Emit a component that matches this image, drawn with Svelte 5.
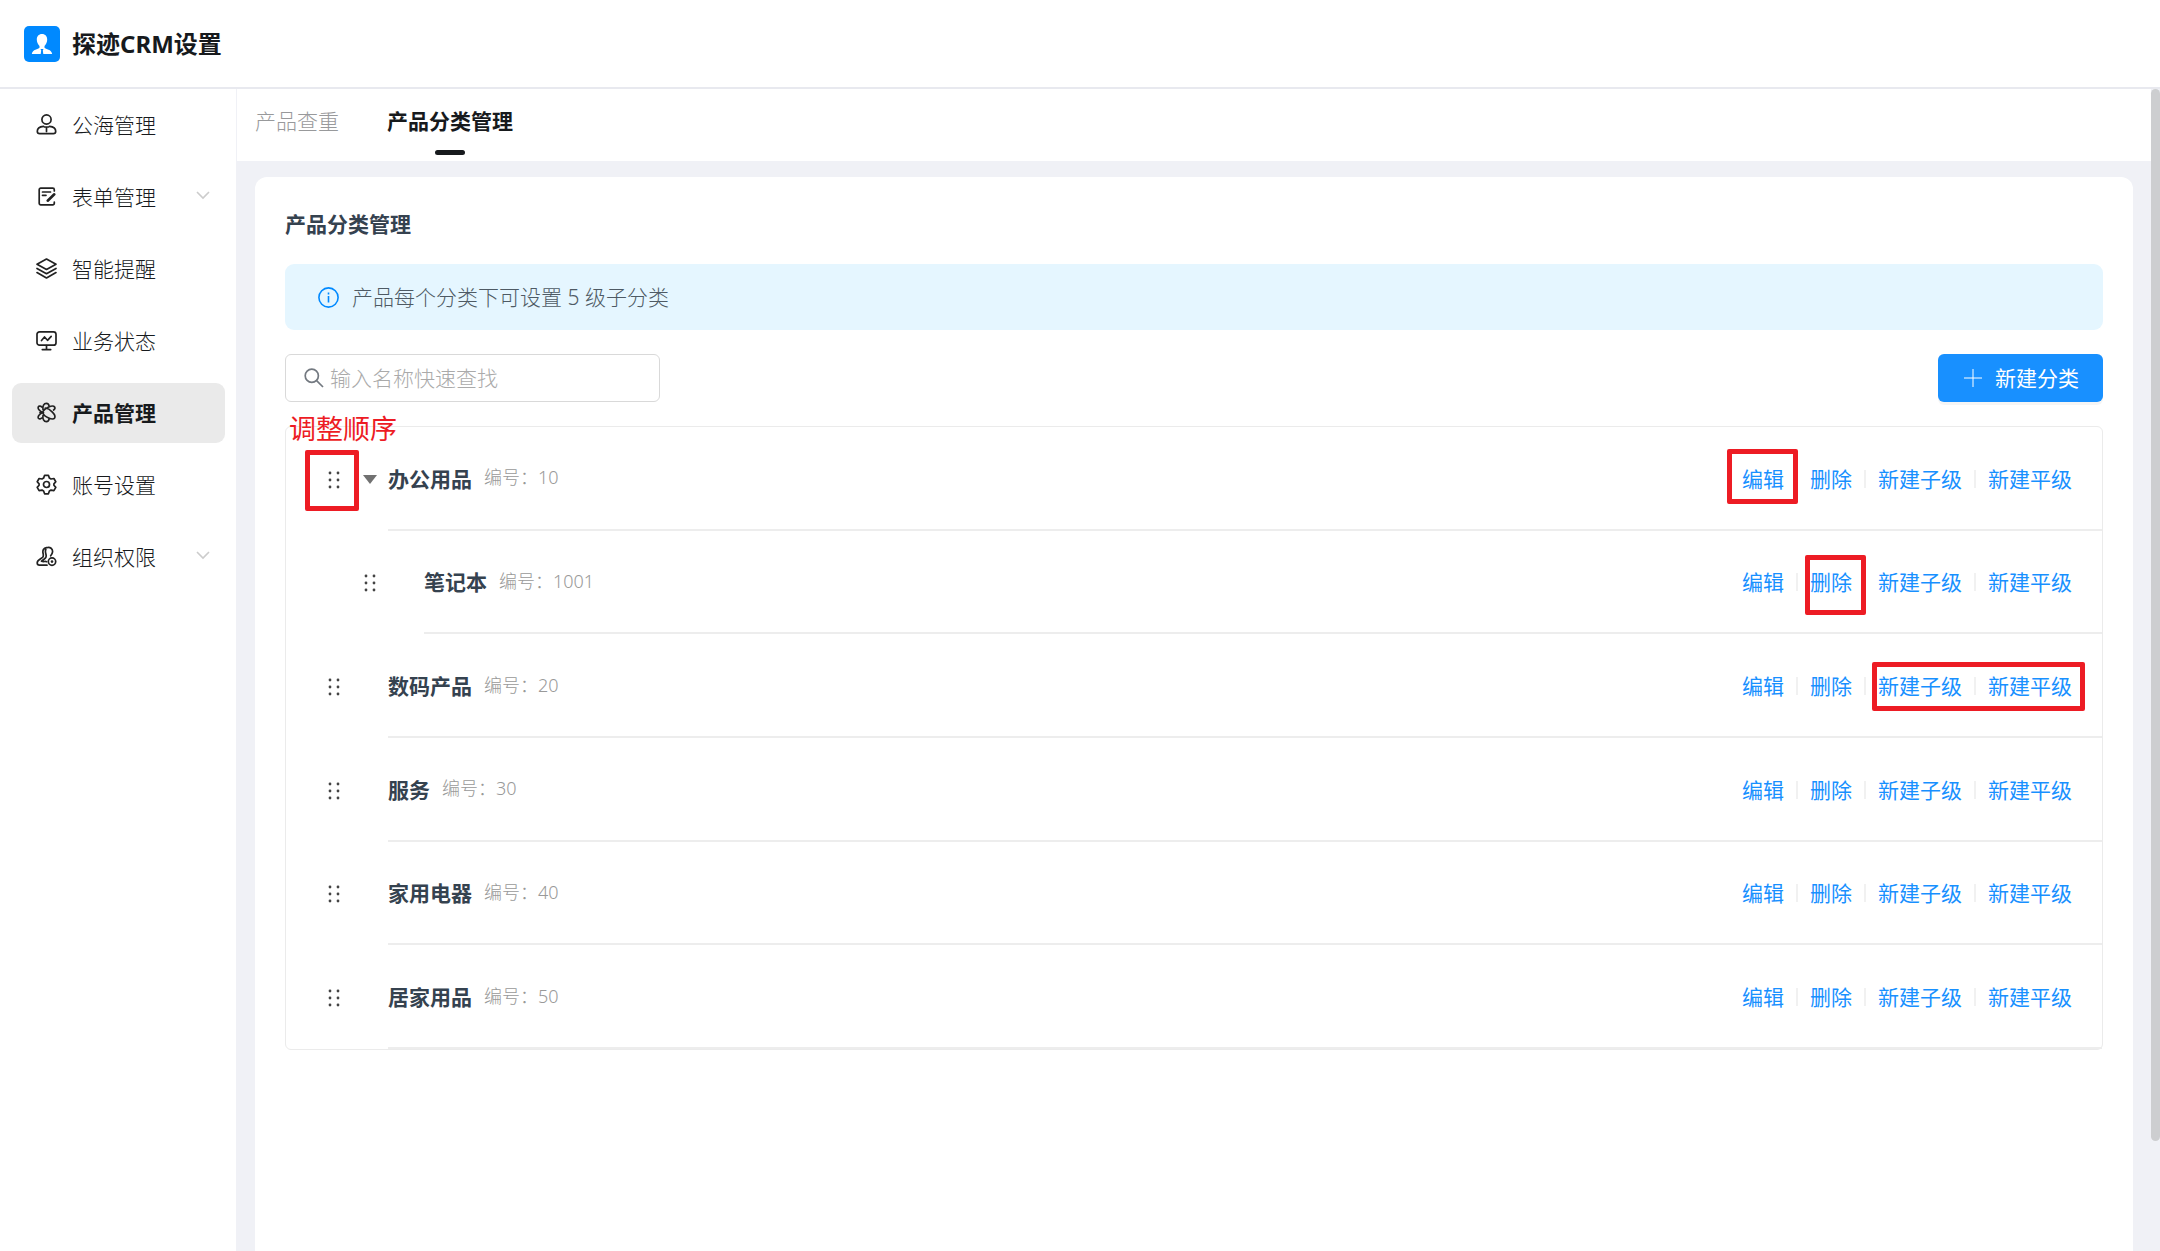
<script lang="ts">
  interface MenuItem {
    icon: string;
    label: string;
    expandable?: boolean;
  }

  interface Category {
    id: number;
    name: string;
    code: string;
    level: number;
    open?: boolean;
    marks: string[];
  }

  const menu: MenuItem[] = [
    { icon: 'person', label: '公海管理' },
    { icon: 'form', label: '表单管理', expandable: true },
    { icon: 'layers', label: '智能提醒' },
    { icon: 'monitor', label: '业务状态' },
    { icon: 'product', label: '产品管理' },
    { icon: 'gear', label: '账号设置' },
    { icon: 'org', label: '组织权限', expandable: true },
  ];

  const tabs = ['产品查重', '产品分类管理'];
  const actions = ['编辑', '删除', '新建子级', '新建平级'];

  const categories: Category[] = [
    { id: 1, name: '办公用品', code: '10', level: 0, open: true, marks: ['drag', 'edit'] },
    { id: 2, name: '笔记本', code: '1001', level: 1, marks: ['delete'] },
    { id: 3, name: '数码产品', code: '20', level: 0, marks: ['create'] },
    { id: 4, name: '服务', code: '30', level: 0, marks: [] },
    { id: 5, name: '家用电器', code: '40', level: 0, marks: [] },
    { id: 6, name: '居家用品', code: '50', level: 0, marks: [] },
  ];

  let activeMenu = $state('产品管理');
  let activeTab = $state('产品分类管理');
  let keyword = $state('');
</script>

<div class="app">
  <header class="header">
    <svg class="logo" viewBox="0 0 36 36" aria-hidden="true">
      <rect width="36" height="36" rx="5" fill="#0089ff" />
      <path
        fill="#fff"
        d="M18 8c3.300 0 5.200 2.300 5.200 5.600 0 2.800-1.300 5.200-2.700 6.500v1.600c1.200 1.500 7 1.500 7.700 6.300H19.300l-.5-3.500.7-1.500h-3l.7 1.500-.5 3.500H7.800c.7-4.800 6.500-4.800 7.700-6.300v-1.600c-1.400-1.300-2.700-3.700-2.700-6.500C12.800 10.300 14.700 8 18 8z"
      />
    </svg>
    <h1>探迹CRM设置</h1>
  </header>

  <div class="layout">
    <nav class="sidebar">
      {#each menu as item (item.label)}
        <button
          class="menu-item"
          class:active={item.label === activeMenu}
          onclick={() => (activeMenu = item.label)}
        >
          <svg class="menu-icon" viewBox="0 0 21 21" aria-hidden="true">
            {#if item.icon === 'person'}
              <circle cx="10.500" cy="5.500" r="4.600" />
              <path d="M7.500 12.300C3.500 12.600 1.300 14.200 1.300 17.300c0 1.800.7 2.400 2.400 2.400h13.600c1.700 0 2.400-.6 2.400-2.400 0-3.100-2.200-4.700-6.200-5M8.500 13h4M10.500 13v4.500" />
            {:else if item.icon === 'form'}
              <path d="M18.300 5V3.700a1.500 1.500 0 0 0-1.500-1.500H4.700a1.500 1.500 0 0 0-1.500 1.500v13.600a1.500 1.500 0 0 0 1.500 1.500h12.100a1.500 1.500 0 0 0 1.500-1.500V16M6.500 6h8M6.500 9.300h3.500" />
              <path class="heavy" d="M18.300 8.300l-6.600 6.400" />
            {:else if item.icon === 'layers'}
              <path d="M10.500 1L20 6.200l-9.500 5.300L1 6.200zM1 10.400l9.500 5.300 9.500-5.300M1 14.600l9.500 5.300 9.500-5.300" />
            {:else if item.icon === 'monitor'}
              <rect x="1" y="1.800" width="19" height="13.400" rx="2.500" />
              <path d="M5.500 10.500l3-3.500 3 3.300 3.700-4M10.500 15.500v3.500M6.300 19.600h8.400" />
            {:else if item.icon === 'product'}
              <path d="M7 7.500C6.300 4 8 1.300 10.300 1.300c1.700 0 2.700 1.300 2.900 3.200M7 13.500c-.7 3.500 1 6.200 3.300 6.200 1.700 0 2.700-1.300 2.900-3.200M6.500 10.500C8.500 5.500 17 2.500 18.600 5c1 1.700-1 3-1 3M6.500 10.500c2 5 10.500 8 12.100 5.500 1.800-3-4.600-9.500-9.300-10M6.500 10.500C4 9 1.500 6.500 2.300 4.800c.7-1.300 3-.5 3.800.4M6.500 10.500C4 12 1.500 14.500 2.300 16.200c.7 1.300 3 .5 3.800-.4M4 10.500h3.500" />
            {:else if item.icon === 'gear'}
              <path d="M8.600 1.300h3.800l1 2.800 1.600.9 2.900-.5 1.900 3.200-1.900 2.200v1.300l1.900 2.200-1.900 3.200-2.900-.5-1.600.9-1 2.800H8.600l-1-2.800-1.600-.9-2.900.5-1.900-3.200 1.900-2.200V9.900L1.200 7.700l1.900-3.200 2.900.5 1.600-.9z" />
              <circle cx="10.500" cy="10.500" r="3" />
            {:else}
              <path d="M10.500 1.700c-3 .3-4 2.800-3.500 5.300.4 2 .8 2.800-.3 4.200-1.500 1.700-5.500 2.800-5.500 5.600 0 1.700.8 2.400 2.300 2.400H11M10.500 1.700c3.700-1.400 6.500 1.300 6 4.500-.2 1.600-.9 2.600-1.800 3.600M9.800 3.500c-1.500 3 1.500 5.300 0 8-.8 1.400-2.600 2-4.300 3.700 2 .9 4-.2 5 .5" />
              <circle cx="16" cy="15.600" r="3.700" />
              <circle class="dot" cx="16" cy="15.600" r="1.300" />
            {/if}
          </svg>
          <span class="menu-label">{item.label}</span>
          {#if item.expandable}
            <svg class="chevron" viewBox="0 0 14 14" aria-hidden="true">
              <path d="M1 3l6 6 6-6" />
            </svg>
          {/if}
        </button>
      {/each}
    </nav>

    <main class="main">
      <div class="tabs" role="tablist">
        {#each tabs as tab (tab)}
          <button
            class="tab"
            class:active={tab === activeTab}
            role="tab"
            aria-selected={tab === activeTab}
            onclick={() => (activeTab = tab)}
          >
            {tab}
          </button>
        {/each}
      </div>

      <section class="card">
        <h2>产品分类管理</h2>

        <div class="notice">
          <svg viewBox="0 0 21 21" aria-hidden="true">
            <circle cx="10.500" cy="10.500" r="9.600" />
            <path d="M10.500 9v6.500M10.500 5.500v2" />
          </svg>
          <span>产品每个分类下可设置 5 级子分类</span>
        </div>

        <div class="toolbar">
          <label class="search">
            <svg viewBox="0 0 20 20" aria-hidden="true">
              <circle cx="7.800" cy="7.800" r="6.600" />
              <path d="M12.600 12.600l6.400 6.400" />
            </svg>
            <input type="text" placeholder="输入名称快速查找" aria-label="输入名称快速查找" bind:value={keyword} />
          </label>
          <button class="create">
            <svg viewBox="0 0 18 18" aria-hidden="true">
              <path d="M9 0v18M0 9h18" />
            </svg>
            <span>新建分类</span>
          </button>
        </div>

        <div class="tree">
          <span class="note">调整顺序</span>
          {#each categories as category (category.id)}
            <div class="row" class:child={category.level > 0}>
              <button class="drag" aria-label="拖动排序">
                <svg viewBox="0 0 12 18" aria-hidden="true">
                  {#each [2, 9, 16] as y}
                    <circle cx="2" cy={y} r="1.400" />
                    <circle cx="10" cy={y} r="1.400" />
                  {/each}
                </svg>
              </button>
              <div class="switcher">
                {#if category.open}
                  <button class="caret" aria-label="收起"></button>
                {/if}
              </div>
              <div class="content">
                <span class="name">{category.name}</span>
                <span class="code">编号：{category.code}</span>
                <div class="actions">
                  {#each actions as action}
                    <a href="#top">{action}</a>
                  {/each}
                </div>
              </div>
              {#each category.marks as mark}
                <span class="mark mark-{mark}"></span>
              {/each}
            </div>
          {/each}
        </div>
      </section>
    </main>

    <div class="scrollbar"></div>
  </div>
</div>

<style>
  :global(body) {
    background: #fff;
  }

  .app {
    display: flex;
    flex-direction: column;
    height: 100vh;
    overflow: hidden;
    font-family: 'Noto Sans', 'Noto Sans CJK SC', sans-serif;
    font-size: 21px;
    font-weight: 300;
    line-height: 30px;
    color: #171a1d;
  }

  .app * {
    box-sizing: border-box;
  }

  button {
    padding: 0;
    border: 0;
    background: none;
    font: inherit;
    color: inherit;
    cursor: pointer;
  }

  svg {
    flex-shrink: 0;
    fill: none;
  }

  .header {
    display: flex;
    align-items: center;
    gap: 12px;
    flex-shrink: 0;
    height: 89px;
    padding: 0 24px;
    border-bottom: 2px solid #e8e9ef;
  }

  .logo {
    width: 36px;
    height: 36px;
  }

  h1 {
    margin: 0;
    font-size: 24px;
    font-weight: 700;
  }

  .layout {
    display: flex;
    flex: 1;
    min-height: 0;
    background: #f0f1f6;
  }

  .sidebar {
    display: flex;
    flex-direction: column;
    gap: 12px;
    flex-shrink: 0;
    width: 237px;
    padding: 6px 11px 6px 12px;
    border-right: 1px solid #f0f1f6;
    background: #fff;
  }

  .menu-item {
    display: flex;
    align-items: center;
    gap: 15px;
    height: 60px;
    padding: 0 15px 0 24px;
    border-radius: 9px;
    text-align: left;
  }

  .menu-item.active {
    background: #eaeaea;
    font-weight: 700;
  }

  .menu-icon {
    width: 21px;
    height: 21px;
    margin-bottom: 2px;
    stroke: #222;
    stroke-width: 1.700;
    stroke-linecap: round;
    stroke-linejoin: round;
  }

  .menu-icon .heavy {
    stroke-width: 2.600;
  }

  .menu-icon .dot {
    fill: #222;
    stroke: none;
  }

  .menu-label {
    flex: 1;
  }

  .chevron {
    width: 14px;
    height: 14px;
    margin-bottom: 2px;
    stroke: #ccc;
    stroke-width: 1.600;
  }

  .main {
    display: flex;
    flex-direction: column;
    flex: 1;
    min-width: 0;
  }

  .tabs {
    display: flex;
    gap: 48px;
    flex-shrink: 0;
    height: 72px;
    padding: 0 18px;
    background: #fff;
  }

  .tab {
    display: flex;
    flex-direction: column;
    align-items: center;
    padding-top: 17px;
    color: #98999b;
  }

  .tab.active {
    color: #171a1d;
    font-weight: 700;
  }

  .tab.active::after {
    content: '';
    width: 30px;
    height: 5px;
    margin-top: 14px;
    border-radius: 3px;
    background: #171a1d;
  }

  .card {
    flex: 1;
    margin: 16px 18px 0;
    padding: 32px 30px;
    border-radius: 12px 12px 0 0;
    background: #fff;
  }

  h2 {
    margin: 0 0 25px;
    font-size: 21px;
    font-weight: 700;
    color: #35424f;
  }

  .notice {
    display: flex;
    align-items: center;
    gap: 13px;
    height: 66px;
    padding: 0 33px;
    border-radius: 9px;
    background: #e5f6ff;
    color: #4e5a64;
  }

  .notice svg {
    width: 21px;
    height: 21px;
    stroke: #0089ff;
    stroke-width: 1.600;
  }

  .toolbar {
    display: flex;
    justify-content: space-between;
    margin: 24px 0;
  }

  .search {
    display: flex;
    align-items: center;
    gap: 6px;
    width: 375px;
    height: 48px;
    padding: 0 18px;
    border: 1px solid #d9d9d9;
    border-radius: 6px;
  }

  .search svg {
    width: 20px;
    height: 20px;
    stroke: #737980;
    stroke-width: 1.700;
  }

  .search input {
    flex: 1;
    min-width: 0;
    padding: 0;
    border: 0;
    outline: 0;
    background: none;
    font: inherit;
    color: inherit;
  }

  .search input::placeholder {
    color: #aaa;
  }

  .create {
    display: flex;
    align-items: center;
    gap: 13px;
    height: 48px;
    padding: 0 24px 0 26px;
    border-radius: 6px;
    background: #1890ff;
    box-shadow: 0 3px 0 rgba(0, 0, 0, 0.04);
    font-weight: 400;
    color: #fff;
  }

  .create svg {
    width: 18px;
    height: 18px;
    stroke: #fff;
    stroke-width: 1;
  }

  .tree {
    position: relative;
    display: grid;
    grid-auto-rows: 1fr;
    min-height: 624px;
    border: 1px solid #ebebeb;
    border-radius: 6px;
  }

  .note {
    position: absolute;
    top: -13px;
    left: 3px;
    font-size: 27px;
    font-weight: 400;
    color: #ed1c24;
  }

  .row {
    position: relative;
    display: flex;
    padding-left: 30px;
  }

  .row.child {
    padding-left: 66px;
  }

  .drag,
  .switcher {
    display: flex;
    align-items: center;
    justify-content: center;
    width: 36px;
    padding-top: 2px;
  }

  .drag svg {
    width: 12px;
    height: 18px;
    fill: #444;
  }

  .caret {
    border: 7px solid transparent;
    border-top: 9px solid #717171;
    border-bottom: 0;
  }

  .content {
    display: flex;
    align-items: center;
    gap: 12px;
    flex: 1;
    padding: 2px 30px 0 0;
    border-bottom: 2px solid #ededed;
  }

  .name {
    font-weight: 700;
    color: #35424f;
  }

  .code {
    padding-bottom: 3px;
    font-size: 18px;
    color: #999;
  }

  .actions {
    display: flex;
    align-items: center;
    margin-left: auto;
  }

  .actions a {
    display: flex;
    align-items: center;
    font-weight: 400;
    color: #1890ff;
    text-decoration: none;
  }

  .actions a + a::before {
    content: '';
    width: 2px;
    height: 18px;
    margin: 0 12px;
    background: #f1f1f1;
  }

  .mark {
    position: absolute;
    border: 5px solid #ed1c24;
    border-radius: 2px;
    pointer-events: none;
  }

  .mark-drag {
    top: 23px;
    left: 19px;
    width: 54px;
    height: 61px;
  }

  .mark-edit {
    top: 22px;
    right: 304px;
    width: 71px;
    height: 55px;
  }

  .mark-delete {
    top: 24px;
    right: 236px;
    width: 61px;
    height: 60px;
  }

  .mark-create {
    top: 28px;
    right: 17px;
    width: 213px;
    height: 49px;
  }

  .scrollbar {
    align-self: flex-start;
    flex-shrink: 0;
    width: 9px;
    height: calc(100% - 110px);
    border-radius: 5px;
    background: #cdced0;
  }
</style>
